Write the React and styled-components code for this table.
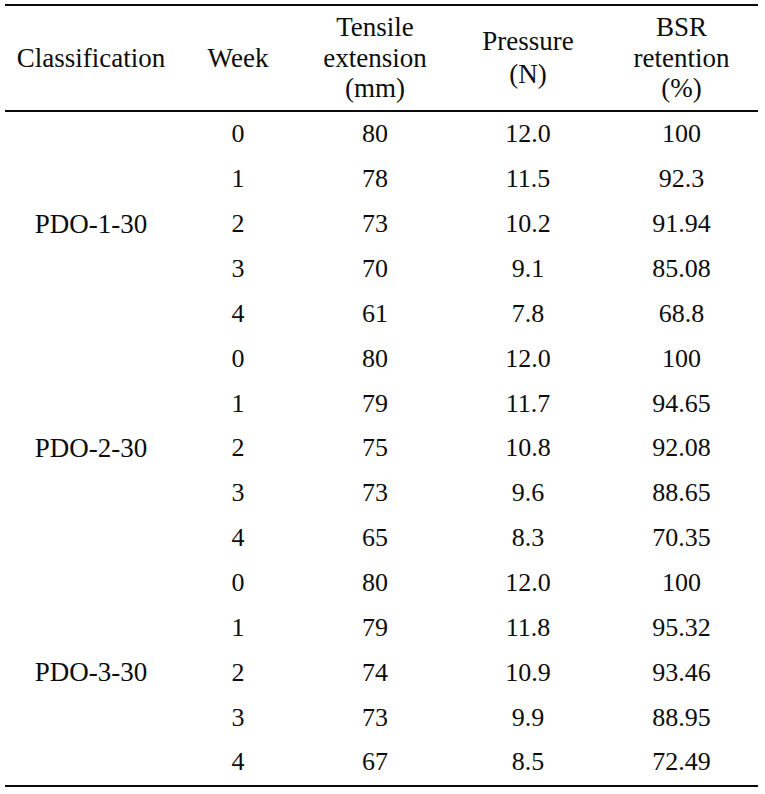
import React from 'react';
import styled, { createGlobalStyle } from 'styled-components';

const GlobalStyle = createGlobalStyle`
  html, body {
    margin: 0;
    padding: 0;
    background: #ffffff;
  }
  body {
    font-family: "Liberation Serif", "Times New Roman", serif;
    color: #0d0d0d;
  }
`;

const columns = '172px 122px 152px 154px 153px';

const groups = [
  {
    name: 'PDO-1-30',
    rows: [
      ['0', '80', '12.0', '100'],
      ['1', '78', '11.5', '92.3'],
      ['2', '73', '10.2', '91.94'],
      ['3', '70', '9.1', '85.08'],
      ['4', '61', '7.8', '68.8'],
    ],
  },
  {
    name: 'PDO-2-30',
    rows: [
      ['0', '80', '12.0', '100'],
      ['1', '79', '11.7', '94.65'],
      ['2', '75', '10.8', '92.08'],
      ['3', '73', '9.6', '88.65'],
      ['4', '65', '8.3', '70.35'],
    ],
  },
  {
    name: 'PDO-3-30',
    rows: [
      ['0', '80', '12.0', '100'],
      ['1', '79', '11.8', '95.32'],
      ['2', '74', '10.9', '93.46'],
      ['3', '73', '9.9', '88.95'],
      ['4', '67', '8.5', '72.49'],
    ],
  },
];

const Page = styled.div`
  padding: 4px 0 0 5px;
  width: 753px;
`;

const Rule = styled.div`
  height: 2px;
  background: #0a0a0a;
`;

const HeaderRow = styled.div`
  display: grid;
  grid-template-columns: ${columns};
  height: 104px;
`;

const HeadCell = styled.div`
  display: flex;
  flex-direction: column;
  align-items: center;
  justify-content: center;
  font-size: 27px;
  line-height: ${(p) => (p.$loose ? '33px' : '30.5px')};
  text-align: center;
`;

const Group = styled.div`
  display: grid;
  grid-template-columns: ${columns};
  grid-template-rows: repeat(5, 44.87px);
`;

const NameCell = styled.div`
  grid-column: 1;
  grid-row: 1 / span 5;
  display: flex;
  align-items: center;
  justify-content: center;
  font-size: 27px;
`;

const Cell = styled.div`
  grid-column: ${(p) => p.$col};
  display: flex;
  align-items: center;
  justify-content: center;
  font-size: 26px;
  line-height: 30px;
`;

export default function App() {
  return (
    <>
      <GlobalStyle />
      <Page>
        <Rule />
        <HeaderRow>
          <HeadCell>Classification</HeadCell>
          <HeadCell>Week</HeadCell>
          <HeadCell>
            <span>Tensile</span>
            <span>extension</span>
            <span>(mm)</span>
          </HeadCell>
          <HeadCell $loose>
            <span>Pressure</span>
            <span>(N)</span>
          </HeadCell>
          <HeadCell>
            <span>BSR</span>
            <span>retention</span>
            <span>(%)</span>
          </HeadCell>
        </HeaderRow>
        <Rule />
        {groups.map((group) => (
          <Group key={group.name}>
            <NameCell>{group.name}</NameCell>
            {group.rows.map((row, r) =>
              row.map((value, c) => (
                <Cell key={`${r}-${c}`} $col={c + 2} style={{ gridRow: r + 1 }}>
                  {value}
                </Cell>
              ))
            )}
          </Group>
        ))}
        <Rule />
      </Page>
    </>
  );
}
